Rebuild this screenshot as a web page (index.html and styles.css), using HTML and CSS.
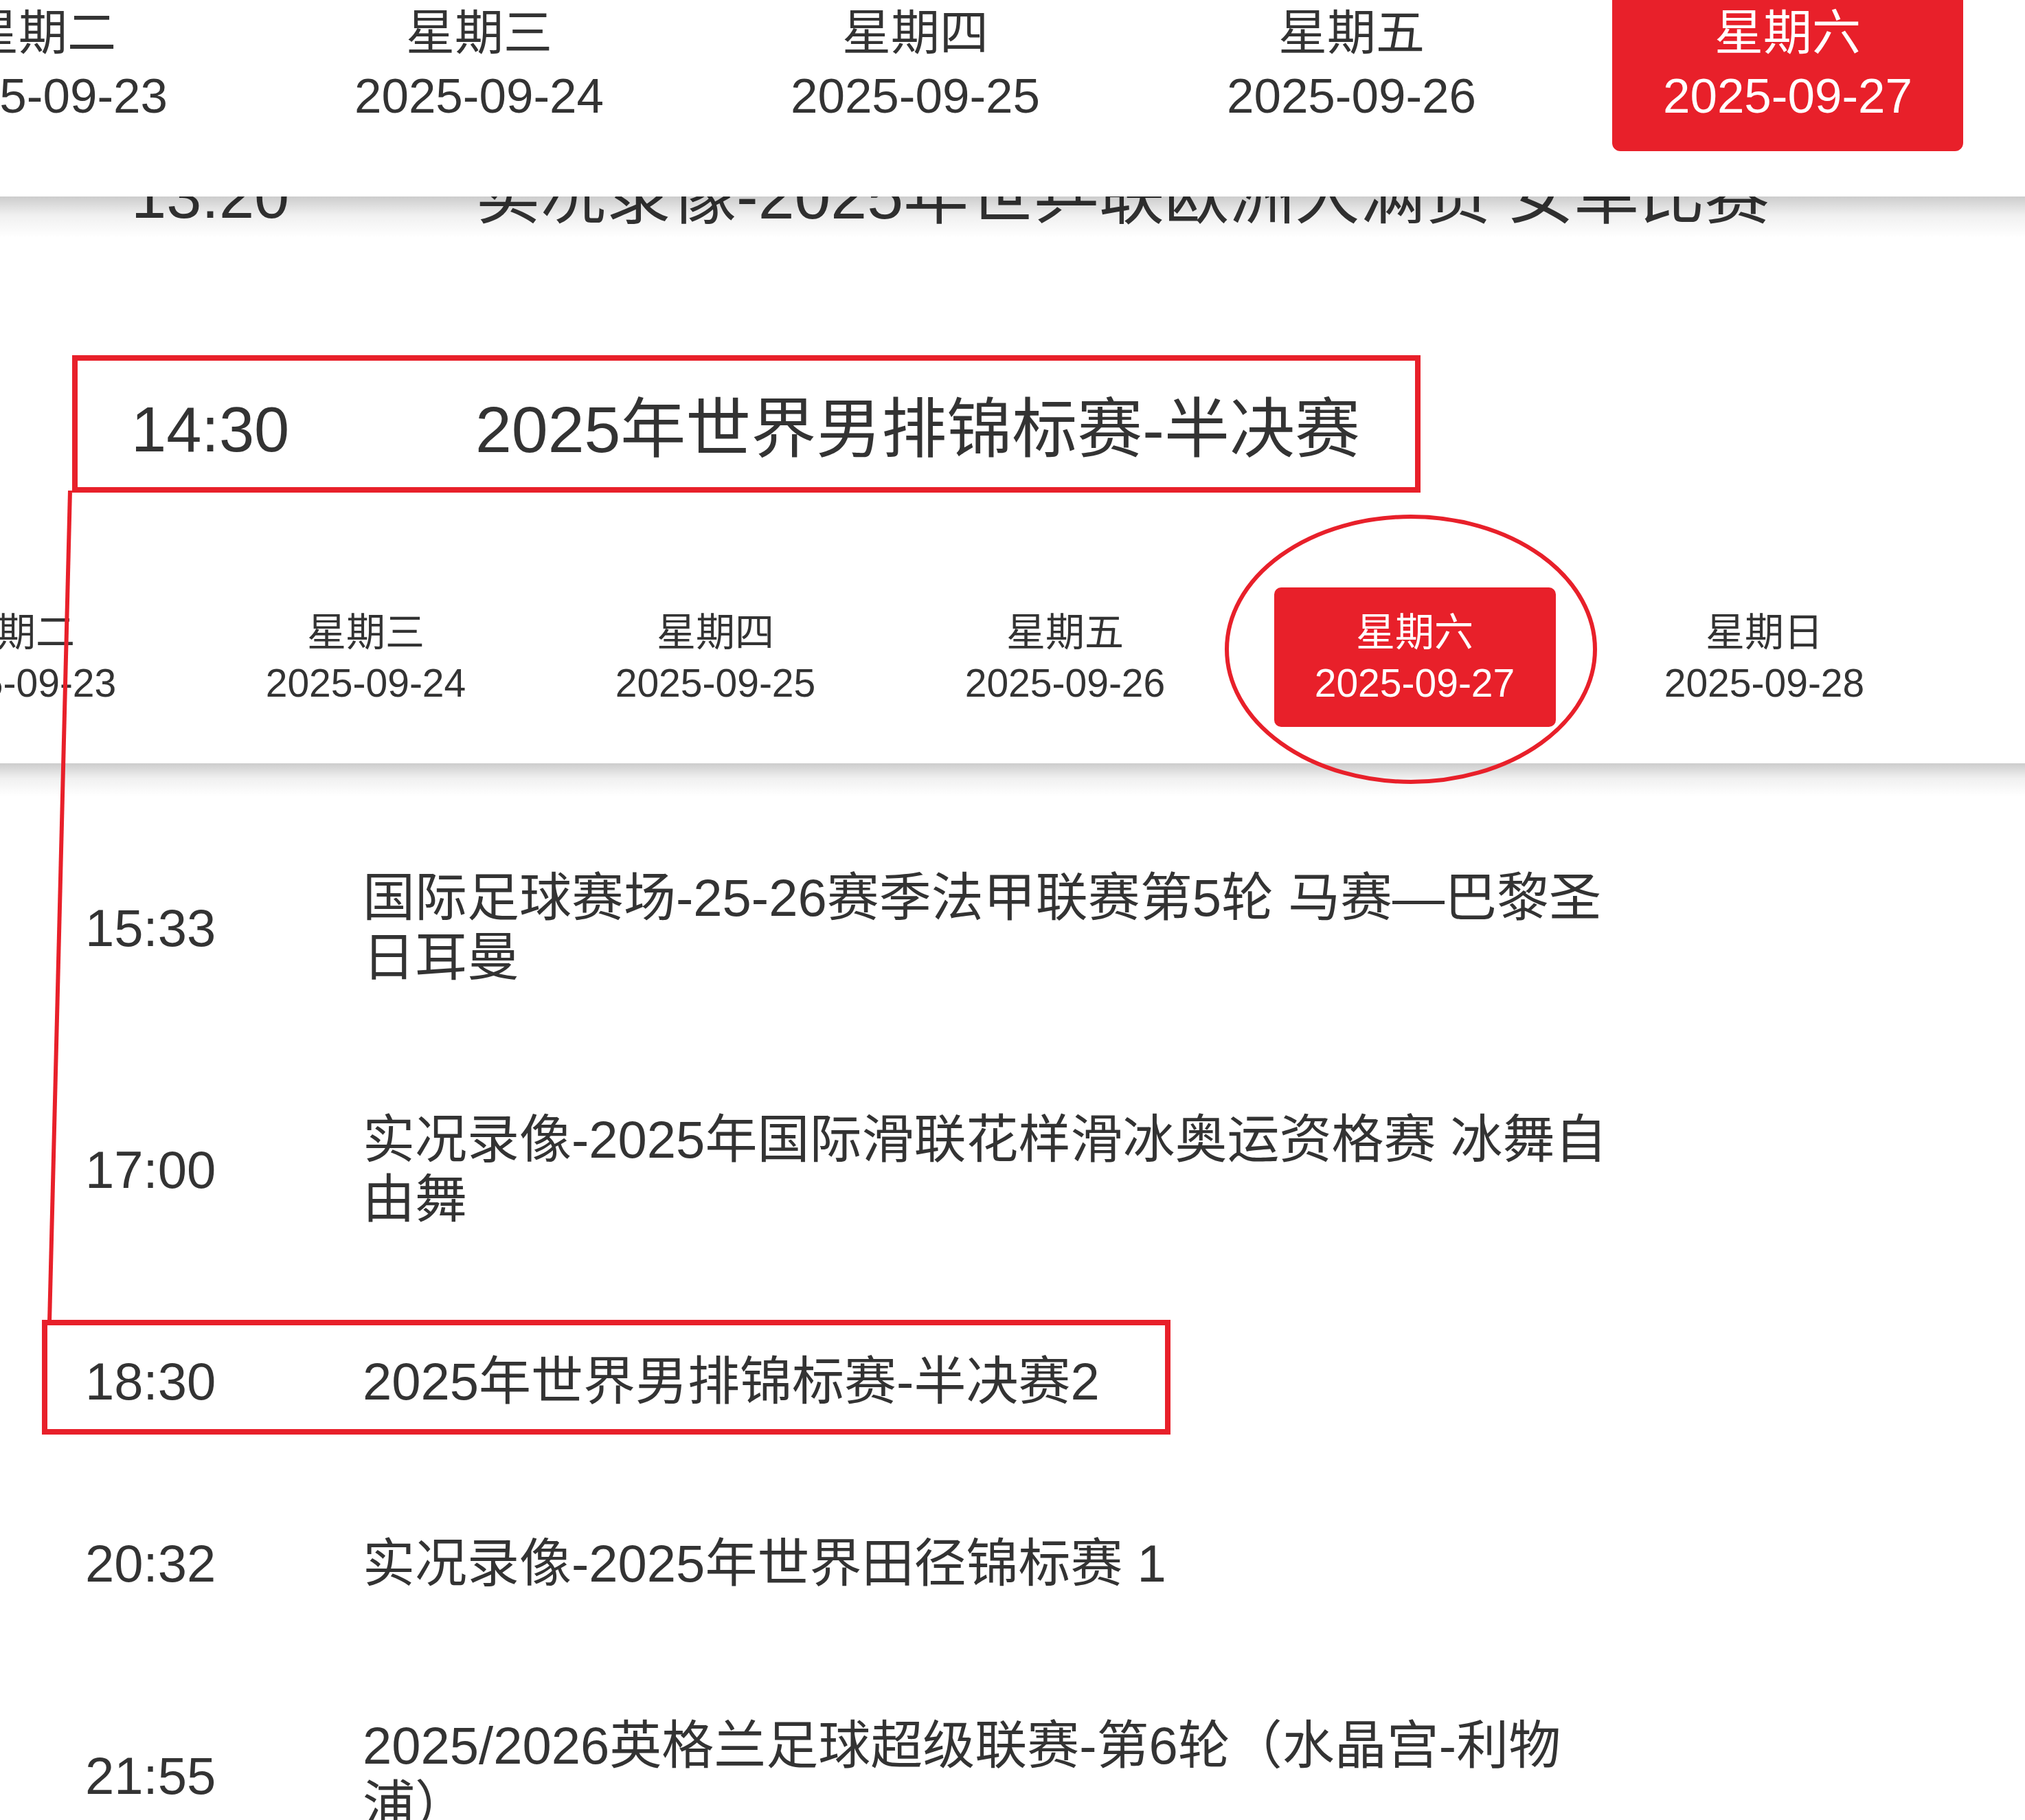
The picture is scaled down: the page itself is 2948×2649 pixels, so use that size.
FILE: index.html
```html
<!DOCTYPE html>
<html lang="zh-CN">
<head>
<meta charset="utf-8">
<title>节目单</title>
<link rel="stylesheet" href="styles.css">
</head>
<body>
<section class="shot shot--zoom">
  <div class="daybar">
    <div class="days">
      <div class="day"><div class="day-box"><span>星期二</span><span>2025-09-23</span></div></div>
      <div class="day"><div class="day-box"><span>星期三</span><span>2025-09-24</span></div></div>
      <div class="day"><div class="day-box"><span>星期四</span><span>2025-09-25</span></div></div>
      <div class="day"><div class="day-box"><span>星期五</span><span>2025-09-26</span></div></div>
      <div class="day day--on"><div class="day-box"><span>星期六</span><span>2025-09-27</span></div></div>
      <div class="day"><div class="day-box"><span>星期日</span><span>2025-09-28</span></div></div>
    </div>
  </div>
  <ul class="schedule">
    <li class="item"><span class="time">13:20</span><span class="title">实况录像-2025年世乒联欧洲大满贯 女单比赛</span></li>
    <li class="item"><span class="time">14:30</span><span class="title">2025年世界男排锦标赛-半决赛</span></li>
  </ul>
</section>

<section class="shot shot--full">
  <div class="daybar">
    <div class="days">
      <div class="day"><div class="day-box"><span>星期二</span><span>2025-09-23</span></div></div>
      <div class="day"><div class="day-box"><span>星期三</span><span>2025-09-24</span></div></div>
      <div class="day"><div class="day-box"><span>星期四</span><span>2025-09-25</span></div></div>
      <div class="day"><div class="day-box"><span>星期五</span><span>2025-09-26</span></div></div>
      <div class="day day--on"><div class="day-box"><span>星期六</span><span>2025-09-27</span></div></div>
      <div class="day"><div class="day-box"><span>星期日</span><span>2025-09-28</span></div></div>
    </div>
  </div>
  <ul class="schedule">
    <li class="item"><span class="time">15:33</span><span class="title">国际足球赛场-25-26赛季法甲联赛第5轮 马赛—巴黎圣日耳曼</span></li>
    <li class="item"><span class="time">17:00</span><span class="title">实况录像-2025年国际滑联花样滑冰奥运资格赛 冰舞自由舞</span></li>
    <li class="item"><span class="time">18:30</span><span class="title">2025年世界男排锦标赛-半决赛2</span></li>
    <li class="item"><span class="time">20:32</span><span class="title">实况录像-2025年世界田径锦标赛 1</span></li>
    <li class="item"><span class="time">21:55</span><span class="title">2025/2026英格兰足球超级联赛-第6轮（水晶宫-利物浦）</span></li>
  </ul>
</section>

<svg class="marks" width="2948" height="2649" viewBox="0 0 2948 2649" aria-hidden="true">
  <rect x="109" y="521" width="1955" height="192" fill="none" stroke="#e8202a" stroke-width="8"/>
  <line x1="102" y1="714" x2="72" y2="1925" stroke="#e8202a" stroke-width="6"/>
  <rect x="65" y="1925" width="1635" height="159" fill="none" stroke="#e8202a" stroke-width="8"/>
  <ellipse cx="2054" cy="945" rx="268" ry="193" fill="none" stroke="#e8202a" stroke-width="6"/>
</svg>
</body>
</html>
```

FILE: styles.css
```css
* {
  box-sizing: border-box;
}

html, body {
  margin: 0;
  padding: 0;
}

body {
  position: relative;
  width: 2948px;
  height: 2649px;
  overflow: hidden;
  background: #fff;
  color: #333;
  font-family: "Liberation Sans", "Noto Sans CJK SC", sans-serif;
}

.shot {
  position: relative;
  overflow: hidden;
}

/* ---------- day tabs ---------- */
.daybar {
  position: relative;
  z-index: 2;
  background: #fff;
}

.daybar::after {
  content: "";
  position: absolute;
  left: 0;
  right: 0;
  top: 100%;
  background: linear-gradient(rgba(0, 0, 0, 0.2), rgba(0, 0, 0, 0.06) 45%, rgba(0, 0, 0, 0));
}

.days {
  display: flex;
}

.day {
  display: flex;
  justify-content: center;
  flex: 0 0 auto;
}

.day-box {
  display: flex;
  flex-direction: column;
  align-items: center;
  justify-content: center;
  color: #333;
  white-space: nowrap;
}

.day--on .day-box {
  background: #e8202a;
  color: #fff;
}

/* ---------- schedule ---------- */
.schedule {
  list-style: none;
  margin: 0;
}

.item {
  display: flex;
  align-items: center;
}

.time {
  flex: 0 0 auto;
}

.title {
  flex: 0 0 auto;
}

/* ---------- full-size screenshot ---------- */
.shot--full .daybar {
  padding: 75px 0 53px;
}

.shot--full .daybar::after {
  height: 48px;
}

.shot--full .days {
  margin-left: -231px;
  font-size: 57px;
}

.shot--full .day {
  width: 509px;
}

.shot--full .day-box {
  width: 410px;
  height: 203px;
  line-height: 74px;
  border-radius: 10px;
}

.shot--full .schedule {
  padding: 63px 0 0 124px;
  font-size: 76px;
  line-height: 87px;
}

.shot--full .item {
  padding: 89px 0;
}

.shot--full .time {
  width: 404px;
}

.shot--full .title {
  width: 1816px;
}

/* ---------- zoomed-in crop ---------- */
.shot--zoom {
  height: 780px;
}

.shot--zoom .daybar {
  padding: 0 0 66px;
}

.shot--zoom .daybar::after {
  height: 60px;
}

.shot--zoom .days {
  margin: -33px 0 0 -255px;
  font-size: 71px;
}

.shot--zoom .day {
  width: 635px;
}

.shot--zoom .day-box {
  width: 511px;
  height: 253px;
  line-height: 92px;
  border-radius: 12px;
}

.shot--zoom .schedule {
  margin-top: -171px;
  padding: 0 0 0 191px;
  font-size: 95px;
  line-height: 108px;
}

.shot--zoom .item {
  padding: 116px 0;
}

.shot--zoom .time {
  width: 501px;
  font-size: 92px;
}

.shot--zoom .title {
  width: 2300px;
}

/* ---------- annotations ---------- */
.marks {
  position: absolute;
  left: 0;
  top: 0;
  z-index: 10;
  pointer-events: none;
}
```
